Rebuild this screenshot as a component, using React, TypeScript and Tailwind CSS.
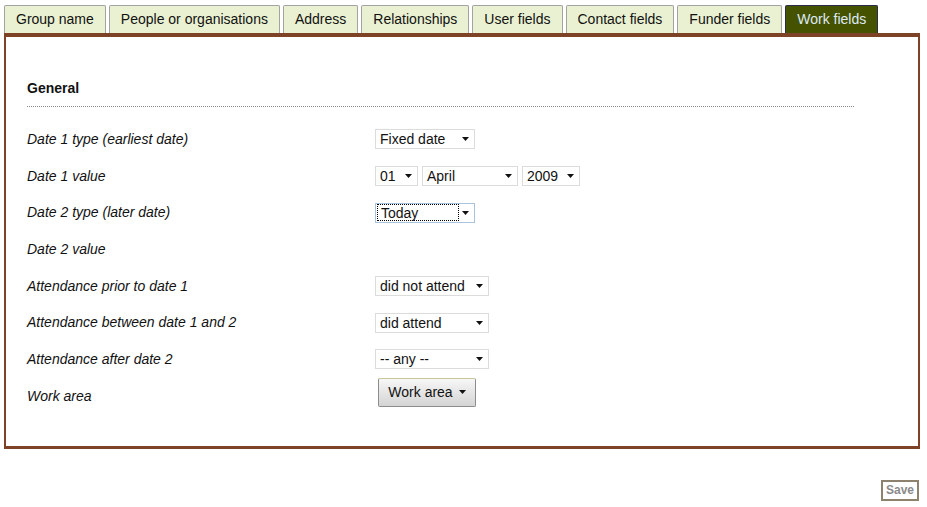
import React from 'react';

const TABS = [
  'Group name',
  'People or organisations',
  'Address',
  'Relationships',
  'User fields',
  'Contact fields',
  'Funder fields',
  'Work fields',
];

function Arrow() {
  return (
    <svg width="7" height="4" viewBox="0 0 7 4" className="shrink-0">
      <path d="M0 0 L7 0 L3.5 4 Z" fill="#111" />
    </svg>
  );
}

function FakeSelect({ value, width, focused }: { value: string; width: string; focused?: boolean }) {
  return (
    <div
      className={`flex h-[20px] items-center justify-between border bg-white pr-[5px] ${width} ${
        focused ? 'border-[#a9c3dc]' : 'border-[#dcdcdc]'
      }`}
    >
      {focused ? (
        <span className="ml-px flex h-[17px] w-[82px] items-center border border-dotted border-black pl-[3px] leading-none">
          {value}
        </span>
      ) : (
        <span className="pl-[4px] leading-none">{value}</span>
      )}
      <Arrow />
    </div>
  );
}

const ROWS: { label: string; control: React.ReactNode }[] = [
  { label: 'Date 1 type (earliest date)', control: <FakeSelect value="Fixed date" width="w-[100px]" /> },
  {
    label: 'Date 1 value',
    control: (
      <div className="flex gap-[4px]">
        <FakeSelect value="01" width="w-[43px]" />
        <FakeSelect value="April" width="w-[96px]" />
        <FakeSelect value="2009" width="w-[58px]" />
      </div>
    ),
  },
  { label: 'Date 2 type (later date)', control: <FakeSelect value="Today" width="w-[100px]" focused /> },
  { label: 'Date 2 value', control: null },
  { label: 'Attendance prior to date 1', control: <FakeSelect value="did not attend" width="w-[114px]" /> },
  { label: 'Attendance between date 1 and 2', control: <FakeSelect value="did attend" width="w-[114px]" /> },
  { label: 'Attendance after date 2', control: <FakeSelect value="-- any --" width="w-[114px]" /> },
  {
    label: 'Work area',
    control: (
      <button className="mb-[7px] ml-[3px] flex h-[29px] w-[98px] items-center justify-center gap-[6px] rounded-[2px] border border-[#8c8c8c] border-t-[#c9c79a] bg-gradient-to-b from-[#f7f7f7] to-[#d4d4d4] pb-px text-[14px] text-[#111]">
        Work area
        <Arrow />
      </button>
    ),
  },
];

export default function App() {
  return (
    <div className="min-h-[507px] w-[927px] bg-white pt-[5px] font-['Liberation_Sans',Arial,sans-serif] text-[14px] text-[#111]">
      <div className="ml-[4px] flex gap-[3px]">
        {TABS.map((tab, i) => {
          const active = i === TABS.length - 1;
          return (
            <div
              key={tab}
              className={`flex h-[28px] items-center rounded-t-[2px] border border-b-0 px-[11px] ${
                active
                  ? 'border-[#2b2d4a] bg-[#455200] text-[#dfeaf6]'
                  : 'border-[#a3a3a3] bg-[#eaf1d2] text-[#111]'
              }`}
            >
              {tab}
            </div>
          );
        })}
      </div>

      <div className="ml-[4px] w-[916px] border-x-2 border-t-4 border-b-[3px] border-[#7e4226] pb-[31px] pl-[21px] pt-[43px]">
        <div className="w-[827px]">
          <h2 className="pb-[10px] text-[14px] font-bold leading-[16px]">General</h2>
          <div className="border-t border-dotted border-[#8a8a8a]" />
        </div>
        <div className="pt-[14px]">
          {ROWS.map((row) => (
            <div key={row.label} className="flex h-[36.7px] items-center">
              <div className="w-[348px] italic">{row.label}</div>
              {row.control}
            </div>
          ))}
        </div>
      </div>

      <div className="flex justify-end pr-[8px] pt-[31px]">
        <button className="h-[21px] w-[38px] border-2 border-[#8c826e] bg-white text-[12px] font-bold leading-none text-[#8a8a8a]">
          Save
        </button>
      </div>
    </div>
  );
}
